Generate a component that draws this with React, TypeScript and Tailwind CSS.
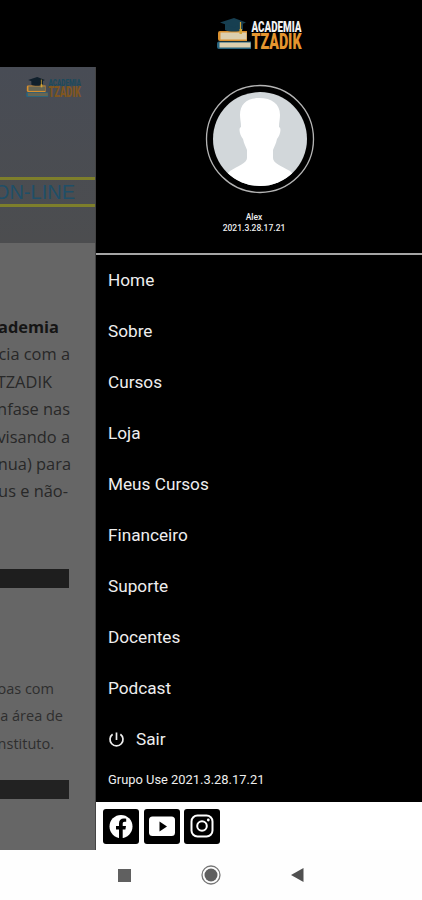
type LogoProps = {
  className: string;
  top: string;
  bottom: string;
  paper: string;
  cap: string;
};

const menu = [
  "Home",
  "Sobre",
  "Cursos",
  "Loja",
  "Meus Cursos",
  "Financeiro",
  "Suporte",
  "Docentes",
  "Podcast",
];

const intro = [
  { text: "da Academia", className: "mr-[36px] font-bold text-[#151515]" },
  { text: "referência com a", className: "mr-[25px]" },
  { text: "Instituto TZADIK", className: "mr-[43px]" },
  { text: "com ênfase nas", className: "mr-[25px]" },
  { text: "visando a", className: "mr-[25px]" },
  { text: "(contínua) para", className: "mr-[24px]" },
  { text: "judeus e não-", className: "mr-[27px]" },
];

const details = [
  { text: "pessoas com", className: "mr-[41px]" },
  { text: "na área de", className: "mr-[32px]" },
  { text: "Instituto.", className: "mr-[41px]" },
];

function Logo({ className, top, bottom, paper, cap }: LogoProps) {
  return (
    <svg viewBox="0 0 86 34" className={className}>
      {/* books */}
      <path d="M2 23.500h32v7.500H2a2 2 0 0 1-2-2v-3.500a2 2 0 0 1 2-2z" fill="#27647f" />
      <path d="M2.500 24.500h31v5H2.500z" fill={paper} />
      <path d="M3 13h27v10H3a2 2 0 0 1-2-2v-6a2 2 0 0 1 2-2z" fill="#d9902f" />
      <path d="M3.500 14.500h26v7h-26z" fill={paper} />
      {/* graduation cap */}
      <path d="M8 6v6c4 2 13 2 18 0V6z" fill={cap} />
      <path d="M17 0 3 4.500l14 5 12-5z" fill={cap} />
      <path d="M23.500 4v10" stroke="#d2a536" strokeWidth="1.200" />
      <path d="M22.500 11h2.500v5h-2.500z" fill="#d2a536" />
      <g fontFamily="Roboto, sans-serif" fontWeight="900">
        <text
          x="34.500"
          y="13.500"
          fontSize="14.500"
          fill={top}
          textLength="50"
          lengthAdjust="spacingAndGlyphs"
        >
          ACADEMIA
        </text>
        <text
          x="34.500"
          y="31"
          fontSize="22.500"
          fill={bottom}
          textLength="50"
          lengthAdjust="spacingAndGlyphs"
        >
          TZADIK
        </text>
      </g>
    </svg>
  );
}

function Page() {
  return (
    <div className="flex h-[850px] w-24 shrink-0 flex-col overflow-hidden bg-black pt-[67px]">
      <div className="flex h-[783px] flex-col border-r border-[#444] bg-[#666]">
        <div className="flex h-[176px] shrink-0 flex-col items-end bg-linear-to-b from-[#484c55] to-[#4c4d4f]">
          <Logo
            className="mt-[10px] mr-[13px] h-[22px] w-[56px]"
            top="#1d4a5c"
            bottom="#80561f"
            paper="#666654"
            cap="#10202c"
          />
          <div className="mt-[78px] flex h-[30px] w-full items-center justify-end border-y-[3px] border-[#7e7f2b] pr-5 font-['Liberation_Sans',Arial,sans-serif] text-[20px] whitespace-nowrap text-[#1f4f68]">
            CURSOS ON-LINE
          </div>
        </div>

        <div className="mt-[70px] flex flex-col items-end font-['Open_Sans',sans-serif] text-[16.400px] leading-[27.400px] whitespace-nowrap text-[#282828]">
          {intro.map((line) => (
            <p key={line.text} className={line.className}>
              {line.text}
            </p>
          ))}
        </div>
        <div className="mt-[64px] h-[19px] w-[69px] shrink-0 bg-[#1e1e1e]" />

        <div className="mt-[87px] flex flex-col items-end font-['Open_Sans',sans-serif] text-[14.500px] leading-[27.400px] whitespace-nowrap text-[#2e2e2e]">
          {details.map((line) => (
            <p key={line.text} className={line.className}>
              {line.text}
            </p>
          ))}
        </div>
        <div className="mt-[23px] h-[19px] w-[69px] shrink-0 bg-[#222]" />
      </div>
    </div>
  );
}

function Avatar() {
  return (
    <svg viewBox="0 0 110 110" className="mt-[32px] ml-px h-[110px] w-[110px]">
      <clipPath id="photo">
        <circle cx="55" cy="55" r="47" />
      </clipPath>
      <circle cx="55" cy="55" r="53.500" fill="none" stroke="#b5b5b5" strokeWidth="1.300" />
      <circle cx="55" cy="55" r="47" fill="#d2d7da" />
      <path
        clipPath="url(#photo)"
        fill="#fff"
        d="M54 14c-12 0-19 6-19 17 0 4 1 7 1 12-3 1-1 9 2 12 1 5 3 8 4 11v8c0 5-9 8-17 13L18 94v16h74V94l-7-7c-9-5-17-8-17-13v-8c1-3 3-6 4-11 3-3 5-11 2-12 0-5 1-8 1-12 0-11-8-17-21-17z"
      />
    </svg>
  );
}

function Socials() {
  return (
    <div className="flex h-[48px] gap-[4.500px] bg-white pt-[7px] pl-[7px]">
      <svg viewBox="0 0 36 35" className="h-[35px] w-[36px]">
        <rect width="36" height="35" rx="3" fill="#000" />
        <circle cx="18" cy="17.500" r="11.500" fill="#fff" />
        <path
          fill="#000"
          d="M16 30V20.500h-3V17h3v-2.500c0-3.300 2-5 4.800-5 1 0 1.900.1 2.400.2v3h-1.500c-1.500 0-2 .8-2 1.900V17h3.300l-.6 3.500h-2.700V30z"
        />
      </svg>
      <svg viewBox="0 0 36 35" className="h-[35px] w-[36px]">
        <rect width="36" height="35" rx="3" fill="#000" />
        <rect x="5" y="7.500" width="26" height="19.500" rx="3.500" fill="#fff" />
        <path d="M15.500 12.500v10l7.500-5z" fill="#000" />
      </svg>
      <svg viewBox="0 0 36 35" className="h-[35px] w-[36px]">
        <rect width="36" height="35" rx="3" fill="#000" />
        <g fill="none" stroke="#fff" strokeWidth="2">
          <rect x="7.500" y="6.500" width="21" height="21" rx="6" />
          <circle cx="18" cy="17" r="4.800" />
        </g>
        <circle cx="24.300" cy="11" r="1.400" fill="#fff" />
      </svg>
    </div>
  );
}

function Drawer() {
  return (
    <div className="flex h-[850px] grow flex-col bg-black font-[Roboto,sans-serif] text-[#eee]">
      <div className="flex h-[255px] shrink-0 flex-col items-center border-b-2 border-[#a5a5a5] pt-[18px]">
        <Logo
          className="ml-px h-[34px] w-[86px]"
          top="#f2f2f2"
          bottom="#e5962f"
          paper="#dccfae"
          cap="#173f51"
        />
        <Avatar />
        <div className="mt-[18px] mr-[10px] text-center text-[8.500px] leading-[10.500px] font-medium">
          <p>Alex</p>
          <p>2021.3.28.17.21</p>
        </div>
      </div>

      <ul className="text-[17.200px]">
        {menu.map((item) => (
          <li key={item} className="flex h-[51px] items-center pl-3">
            {item}
          </li>
        ))}
        <li className="flex h-[51px] items-center gap-[11px] pl-3">
          <svg viewBox="0 0 17 17" className="h-[17px] w-[17px]">
            <path
              d="M4.600 3.200a6.500 6.500 0 1 0 7.800 0M8.500 1.500v7.500"
              fill="none"
              stroke="#eee"
              strokeWidth="1.700"
            />
          </svg>
          Sair
        </li>
      </ul>
      <p className="mt-[6px] h-[31px] pl-3 text-[12.900px] leading-[17px]">
        Grupo Use 2021.3.28.17.21
      </p>
      <Socials />
    </div>
  );
}

function App() {
  return (
    <div className="h-[900px] w-[422px] overflow-hidden bg-white">
      <div className="flex">
        <Page />
        <Drawer />
      </div>
      {/* Android navigation bar */}
      <div className="flex h-[50px] items-center bg-[#fefefe]">
        <div className="ml-[118px] h-[13px] w-[13px] bg-[#606060]" />
        <svg viewBox="0 0 22 22" className="ml-[69px] h-[22px] w-[22px]">
          <circle cx="11" cy="11" r="9" fill="none" stroke="#777" strokeWidth="1.300" />
          <circle cx="11" cy="11" r="6.500" fill="#606060" />
        </svg>
        <svg viewBox="0 0 13 14" className="ml-[69px] h-[14px] w-[13px]">
          <path d="M12.500 0v14L0 7z" fill="#505050" />
        </svg>
      </div>
    </div>
  );
}

export default App;
